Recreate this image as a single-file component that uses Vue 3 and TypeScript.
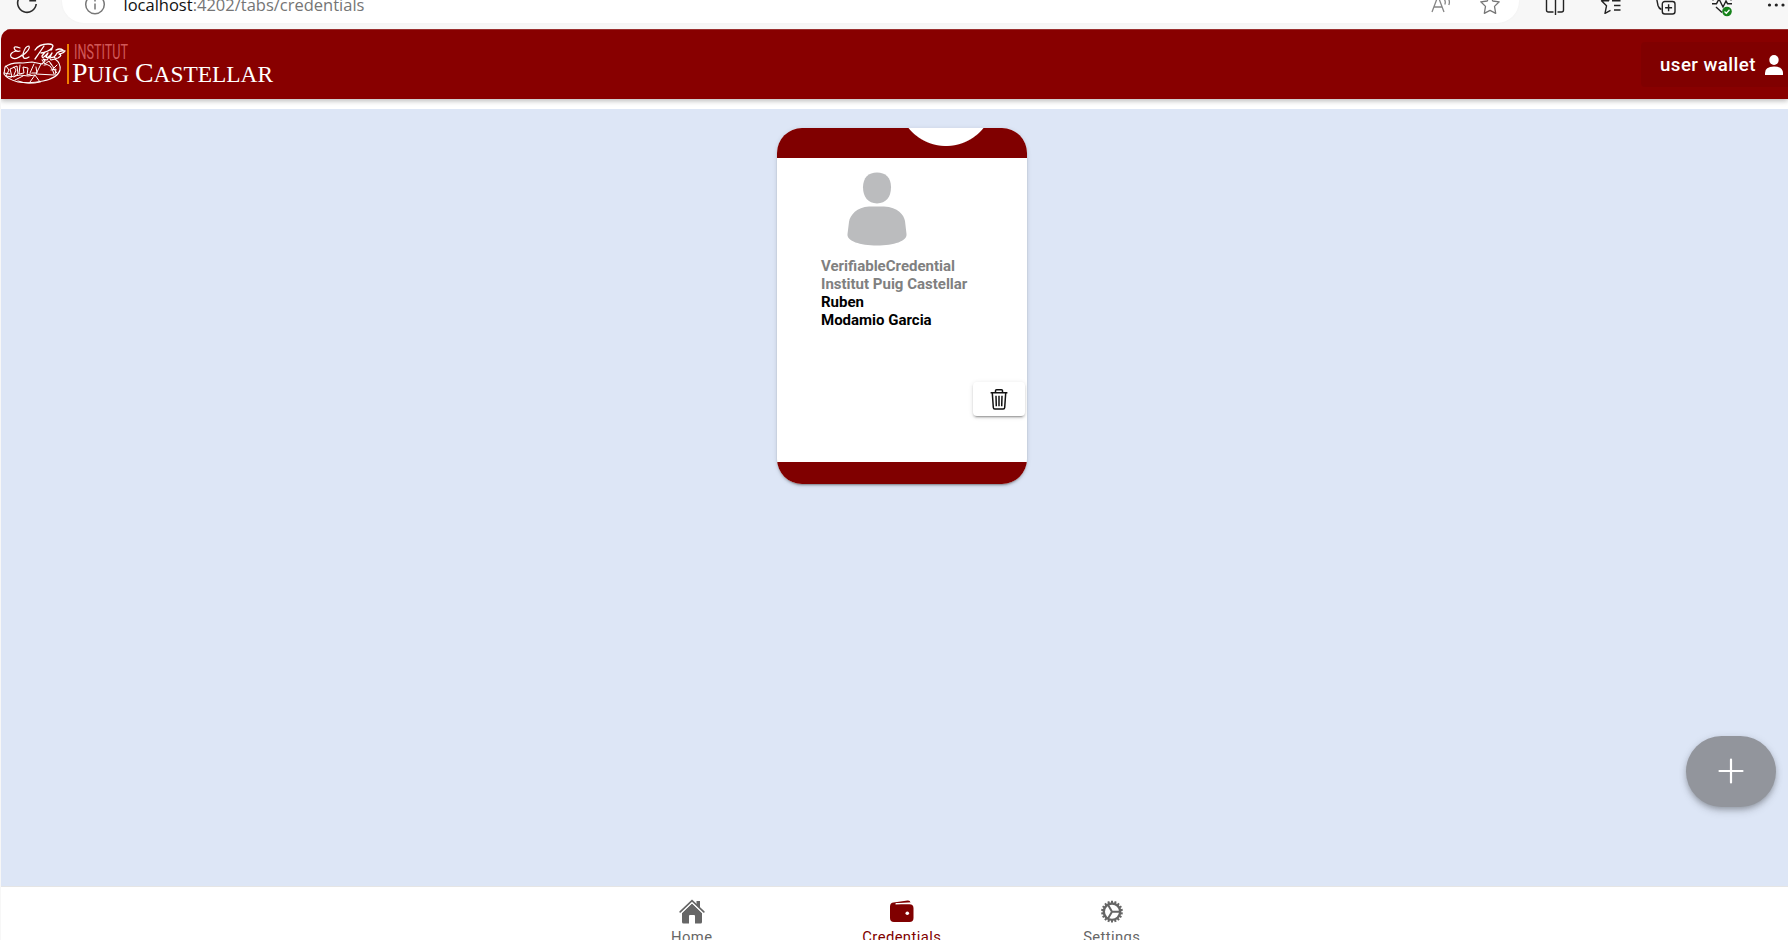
<script setup lang="ts">
import { ref } from 'vue'

interface Tab {
  id: string
  label: string
}

interface Credential {
  type: string
  issuer: string
  name: string
  surname: string
}

const tabs: Tab[] = [
  { id: 'home', label: 'Home' },
  { id: 'credentials', label: 'Credentials' },
  { id: 'settings', label: 'Settings' },
]
const active = ref('credentials')

const credentials = ref<Credential[]>([
  { type: 'VerifiableCredential', issuer: 'Institut Puig Castellar', name: 'Ruben', surname: 'Modamio Garcia' },
])

const teeth = Array.from({ length: 18 }, (_, i) => i * 20)
</script>

<template>
  <div class="window">
    <div class="browser">
      <svg class="reload" width="24" height="29" viewBox="0 0 24 29" fill="none" stroke="#2b2b2b" stroke-width="1.6">
        <path d="M5.1-2A9.3 9.3 0 1 0 22.2 4M21.3-4V.6h-6" />
      </svg>
      <div class="address">
        <svg class="info" width="22" height="24" viewBox="0 0 22 24" fill="none" stroke="#777" stroke-width="1.5">
          <circle cx="11" cy="4.5" r="9.3" />
          <path d="M11 3.5v6M11-.2v1.8" />
        </svg>
        <span class="url"><b>localhost</b>:4202/tabs/credentials</span>
        <svg class="read" width="22" height="24" viewBox="0 0 22 24" fill="none" stroke="#858585" stroke-width="1.3">
          <path d="M1 12 7-4l6 16M3.2 7h7.6M13.2-1q1.8 2.8.6 5.5M17-2q2.3 3.5.8 7" />
        </svg>
        <svg class="star" width="22" height="24" viewBox="0 0 22 24" fill="none" stroke="#777" stroke-width="1.3" stroke-linejoin="round">
          <path d="m11-5 2.8 6 6.4.8-4.7 4.6 1.2 6.9-5.7-3-5.7 3 1.2-6.9L1.8 1.8 8.2 1z" />
        </svg>
      </div>
      <div class="tools">
        <svg width="22" height="24" viewBox="0 0 22 24" fill="none" stroke="#222" stroke-width="1.4">
          <path d="M11.5-3v18M9.5 12h-5Q2.5 12 2.5 10V-3M13.5 12h4Q19.5 12 19.5 10V-3" />
        </svg>
        <svg width="22" height="24" viewBox="0 0 22 24" fill="none" stroke="#222" stroke-width="1.4" stroke-linejoin="round">
          <path d="M9 .8H1.5l5 5-1.500 7.500 5.500-3M8.500.8 10.500-4M12 .8h8.500M14 5.500h6.500M14 10h6.500" />
        </svg>
        <svg width="22" height="24" viewBox="0 0 22 24" fill="none" stroke="#222" stroke-width="1.4">
          <rect x="7.3" y="1.5" width="12.7" height="12.5" rx="2.5" />
          <path d="M13.6 4.3v7M10.1 7.8h7M1.5-2l1.5 7.5q.8 3 3.5 4" />
        </svg>
        <svg width="22" height="24" viewBox="0 0 22 24" fill="none" stroke="#222" stroke-width="1.4">
          <path d="M1 3.7h4.5L8-1l4 8 3-6 1.5 2.7H21M5 7l6 5.500M2-2v2.500M20-2v2.500" />
          <circle cx="16" cy="11.5" r="4.8" fill="#16821b" stroke="none" />
          <path d="m13.5 11.5 1.8 1.8 3.2-3.5" stroke="#fff" stroke-width="1.3" />
        </svg>
        <svg width="22" height="24" viewBox="0 0 22 24" fill="#222">
          <circle cx="3.5" cy="5" r="1.6" /><circle cx="10.3" cy="5" r="1.6" /><circle cx="17" cy="5" r="1.6" />
        </svg>
      </div>
    </div>

    <div class="app">
      <header class="header">
        <div class="brand">
          <svg class="emblem" width="64" height="44" viewBox="0 0 64 44" fill="none" stroke="#fff" stroke-width="1" stroke-linecap="round" stroke-linejoin="round">
            <path d="M17 5Q9 2 12 7q2 2 5 1M13 8Q6 10 8 14q4 4 11-2" stroke-width="1.2" />
            <path d="M19 13Q28 6 26 3q-4 0-6 8-.5 7 6 3" stroke-width="1.2" />
            <path d="M41 3Q37 9 32 16M32 7Q36 1 45 1q7 0 4 4-4 4-11 5M42 9l-3 4q0 4 6-3l-2 4q2 2 6-4l-2 4q4 2 7-4 4-3 8-2-1 2-6 3 4 1-1 4-3 1-4-1M48 7l1-1M53 7q4-2 7 0" stroke-width="1.3" />
            <path d="M2 24q6-5 18-4l9-1 10 2 3-3-2-2 4 1 2-3 2 3 4-1q6 4 5 11-2 8-17 11-13 3-25 1-11-3-14-8z" stroke-width="1.1" />
            <path d="m3 23 3 4-3 6 6 1-2-8 7-3 1 8-4 3M11 24l2 3-2 5M17 22l-1 9 5-1-1-6 5 1-1 7 4-1M7 34l10-2 8 1 7-1 5 7M31 21l-4 9M33 24l1 6h-5M38 21l-5 10 18 1M41 22q7-3 10 9M47 20l4 5 3-3M48 27l5-1-1 6M50 25l4 5M20 33l-8 4M32 32l-5 7M1 30l6 1M15 38q11 4 22 1M39 17l3 4 4-3 3 4" />
          </svg>
          <span class="rule"></span>
          <div class="names">
            <svg class="small" width="58" height="18" viewBox="0 0 58 18"><text x="0" y="16" textLength="54" lengthAdjust="spacingAndGlyphs">INSTITUT</text></svg>
            <svg class="large" width="206" height="26" viewBox="0 0 206 26"><text x="0" y="20.4" textLength="201" lengthAdjust="spacingAndGlyphs"><tspan class="cap">P</tspan>UIG <tspan class="cap">C</tspan>ASTELLAR</text></svg>
          </div>
        </div>
        <button class="user">
          <span>user wallet</span>
          <svg width="18" height="20" viewBox="0 0 18 20" fill="#fff"><ellipse cx="9" cy="5" rx="4.7" ry="5" /><path d="M0 20v-2q0-6.500 9-6.500t9 6.500v2z" /></svg>
        </button>
      </header>

      <main class="content">
        <article v-for="c in credentials" :key="c.type" class="card">
          <div class="card-top"></div>
          <div class="card-body">
            <svg class="avatar" width="88" height="88" viewBox="0 0 88 88" fill="#bbbcbe">
              <path d="M44 6.5c8.500 0 14 5 14 14.800S53 37.400 44 37.400 30 31 30 21.300 35.500 6.500 44 6.500z" />
              <path d="M36 40.500h15C65 41 71 49 72 55l1.500 13c1 7-12.500 11.500-29.500 11.500S13.500 75 14.500 68L16 56c1-7 8-15 20-15.500z" />
            </svg>
            <div class="details">
              <div class="muted">{{ c.type }}</div>
              <div class="muted">{{ c.issuer }}</div>
              <div>{{ c.name }}</div>
              <div>{{ c.surname }}</div>
            </div>
            <button class="delete" aria-label="Delete">
              <svg width="18" height="21" viewBox="0 0 18 21" fill="none" stroke="#111" stroke-width="1.5" stroke-linejoin="round">
                <path d="M.6 3.800h16.800M5.500 3.500V1.800q0-1 1-1h5q1 0 1 1v1.700M2.300 4l1 14.500q.1 1.500 1.500 1.500h8.400q1.400 0 1.500-1.500L15.700 4M6 6.700l.3 10.500M9 6.700v10.500M12 6.700l-.3 10.500" />
              </svg>
            </button>
          </div>
          <div class="card-bottom"></div>
        </article>
        <button class="fab" aria-label="Add">
          <svg width="26" height="26" viewBox="0 0 26 26" stroke="#fff" stroke-width="2.2" stroke-linecap="round"><path d="M13 1.500v23M1.500 13h23" /></svg>
        </button>
      </main>

      <nav class="tabs">
        <button v-for="t in tabs" :key="t.id" class="tab" :class="{ active: active === t.id }" @click="active = t.id">
          <svg v-if="t.id === 'home'" width="26" height="26" viewBox="0 0 26 26" fill="currentColor">
            <path d="M17.500 2H21v7.500l-3.500-3.200zM13 4.500l10 9.500v9q0 1.500-1.500 1.500H16V17q0-1-1-1h-4q-1 0-1 1v7.500H4.500Q3 24.500 3 23v-9z" />
            <path d="M1.200 12.800 13 1.700l11.800 11.100" fill="none" stroke="currentColor" stroke-width="1.7" stroke-linecap="round" />
            <path d="M2.200 14.200 13 4l10.800 10.200" fill="none" stroke="#fff" stroke-width=".9" />
          </svg>
          <svg v-else-if="t.id === 'credentials'" width="26" height="26" viewBox="0 0 26 26" fill="currentColor">
            <path d="M1 7.500C1 4.500 2.500 3.800 4.500 3.500l14-2q2.800-.3 3 2.200L7 4v1.300h13.500q4 0 4 4V19q0 4-4 4H5q-4 0-4-4z" />
            <path d="M6.300 4.900 21.500 3.900" fill="none" stroke="#fff" stroke-width=".9" />
            <circle cx="18.3" cy="14.2" r="1.8" fill="#fff" />
          </svg>
          <svg v-else width="26" height="26" viewBox="0 0 26 26" fill="none" stroke="currentColor">
            <circle cx="13" cy="12.7" r="8.2" stroke-width="2.4" />
            <path v-for="a in teeth" :key="a" d="M13 1.800v2.600" :transform="`rotate(${a} 13 12.7)`" stroke-width="2" />
            <path d="M13 12.700h8M13 12.700 9 5.800M13 12.700 9 19.600" stroke-width="2" />
          </svg>
          <span>{{ t.label }}</span>
        </button>
      </nav>
    </div>
  </div>
</template>

<style>
html, body { margin: 0; overflow: hidden; }
</style>

<style scoped>
* { box-sizing: border-box; }
button { border: 0; padding: 0; font: inherit; color: inherit; background: none; cursor: pointer; }
svg { display: block; flex: none; }
.window { width: 1788px; height: 940px; overflow: hidden; display: flex; flex-direction: column; background: #f7f7f7; font-family: Roboto, sans-serif; }
.browser { height: 29px; flex: none; display: flex; align-items: flex-start; }
.reload { margin-left: 14px; }
.address { width: 1460px; height: 23px; margin-left: 24px; padding-left: 21.5px; display: flex; background: #fff; border-radius: 0 0 22px 22px; box-shadow: 0 0 3px #00000008; }
.url { font-family: "Open Sans", sans-serif; font-size: 16.5px; line-height: 22px; height: 24px; margin: -6px 0 0 18px; color: #757575; white-space: nowrap; }
.url b { color: #111; font-weight: 400; }
.read { margin-left: auto; }
.star { margin: 0 18.5px 0 25.5px; }
.tools { display: flex; gap: 33.5px; margin-left: 25px; }
.app { flex: 1; min-height: 0; margin-left: 1px; border-radius: 10px 0 0 0; display: flex; flex-direction: column; overflow: hidden; background: #fff; }
.header { height: 70px; flex: none; display: flex; justify-content: space-between; background: #880000; border-top: 1px solid #9b3030; box-shadow: 0 2px 5px #0004; color: #fff; }
.brand { display: flex; padding: 13px 0 0 2px; }
.rule { width: 1.5px; height: 40px; background: #f08000; margin: 1px 0 0 0; }
.names { margin-left: 3.5px; }
.small { margin-left: 2px; fill: #d05858; font: 400 19.5px Roboto, sans-serif; overflow: visible; }
.large { margin-top: 1px; fill: #fff; font: 23.5px "Liberation Serif", serif; overflow: visible; }
.large .cap { font-size: 28px; }
.user { width: 147px; height: 45px; margin-top: 12px; padding: 0 5px 0 19px; display: flex; align-items: center; justify-content: space-between; background: #800000; border-radius: 4px 0 0 4px; font-size: 18.7px; font-weight: 500; letter-spacing: .45px; white-space: nowrap; }
.content { flex: none; height: 777px; margin-top: 10px; padding-top: 19px; background: #dde6f6; position: relative; }
.card { width: 250px; height: 356px; margin-left: 776px; border-radius: 25px; overflow: hidden; background: #fff; display: flex; flex-direction: column; box-shadow: 0 3px 1px -2px #0003, 0 2px 2px #00000024, 0 1px 5px #0000001f; }
.card-top { height: 30px; background: radial-gradient(circle at 169px -30px, #fff 47.5px, #800000 48.5px); }
.card-body { flex: 1; display: flex; flex-direction: column; }
.avatar { margin: 8px 0 0 56px; }
.details { margin: 3px 0 0 44px; font-size: 15px; line-height: 18px; font-weight: 700; color: #000; white-space: nowrap; }
.muted { color: #808080; }
.delete { width: 52px; height: 34px; margin: 53px 2px 0 auto; display: grid; place-items: center; border-radius: 4px; background: #fff; box-shadow: 0 3px 1px -2px #0003, 0 2px 2px #00000024, 0 1px 5px #0000001f; }
.card-bottom { height: 22px; background: #800000; }
.fab { position: absolute; right: 12px; bottom: 79px; width: 90px; height: 71px; padding-bottom: 1px; border-radius: 36px; display: grid; place-items: center; background: #92959c; box-shadow: 0 3px 5px -1px #0003, 0 5px 8px #0000001c, 0 1px 8px #00000018; }
.tabs { flex: none; height: 80px; display: flex; justify-content: center; padding-left: 14px; border-top: 1px solid #e5e5e5; background: #fff; color: #666; }
.tab { width: 210px; display: flex; flex-direction: column; align-items: center; padding-top: 12px; font-size: 14.8px; line-height: 18px; letter-spacing: .4px; }
.tab span { margin: 3px 0 0 .5px; }
.tab.active { color: #800000; }
</style>
